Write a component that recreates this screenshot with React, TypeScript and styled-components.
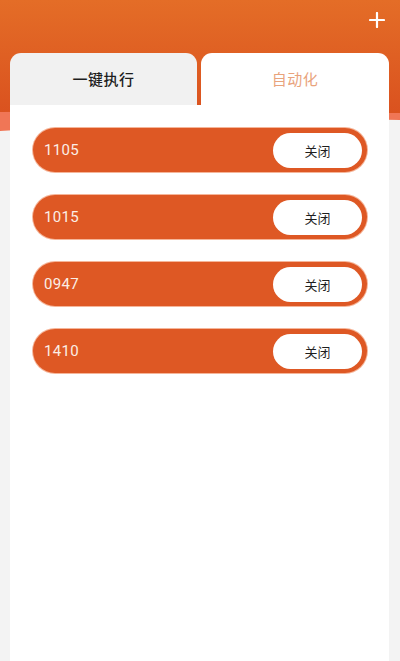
import React from "react";
import styled, { createGlobalStyle } from "styled-components";

const Global = createGlobalStyle`
  html, body { margin: 0; padding: 0; background: #f3f3f3; }
  body { font-family: Roboto, "Noto Sans CJK SC", sans-serif; }
  * { box-sizing: border-box; }
`;

const Page = styled.div`
  position: relative;
  min-height: 661px;
  overflow: hidden;
`;

const HeaderBg = styled.svg`
  position: absolute;
  left: 0;
  top: 0;
  width: 400px;
  height: 140px;
  z-index: 0;
`;

const Toolbar = styled.div`
  position: relative;
  z-index: 1;
  height: 53px;
  display: flex;
  justify-content: flex-end;
  align-items: flex-start;
  padding: 11px 14px 0 0;
`;

const IconButton = styled.button`
  border: none;
  background: transparent;
  padding: 0;
  width: 18px;
  height: 18px;
  display: flex;
  align-items: center;
  justify-content: center;
`;

const Panel = styled.div`
  position: relative;
  z-index: 1;
  margin: 0 11px 0 10px;
`;

const Tabs = styled.div`
  display: grid;
  grid-template-columns: 187px 1fr;
  column-gap: 4px;
  height: 52px;
`;

const Tab = styled.div<{ $active?: boolean }>`
  display: flex;
  align-items: center;
  justify-content: center;
  border-radius: 11px 11px 0 0;
  background: ${(p) => (p.$active ? "#ffffff" : "#f1f1f1")};
  color: ${(p) => (p.$active ? "#e9a37c" : "#1e1e1e")};
  font-family: "Noto Sans CJK SC", sans-serif;
  font-size: 15px;
  font-weight: ${(p) => (p.$active ? 400 : 500)};
  letter-spacing: 0.5px;
  padding-bottom: 2px;
`;

const Card = styled.div`
  background: #ffffff;
  min-height: 560px;
  padding: 23px 22px 0 23px;
  display: flex;
  flex-direction: column;
  gap: 23px;
`;

const Row = styled.div`
  height: 44px;
  border-radius: 22px;
  background: #de5824;
  box-shadow: 0 0 0 1px rgba(236, 120, 70, 0.55);
  display: flex;
  align-items: center;
  justify-content: space-between;
  padding: 0 5px 0 11px;
`;

const RowLabel = styled.span`
  color: #fbeee6;
  font-size: 15px;
  font-family: Roboto, sans-serif;
  letter-spacing: 0.3px;
`;

const CloseButton = styled.button`
  width: 89px;
  height: 35px;
  border-radius: 18px;
  border: none;
  background: #ffffff;
  color: #1e1e1e;
  font-family: "Noto Sans CJK SC", sans-serif;
  font-size: 13px;
  display: flex;
  align-items: center;
  justify-content: center;
  padding: 0;
`;

const items = ["1105", "1015", "0947", "1410"];

export default function App() {
  return (
    <>
      <Global />
      <Page>
        <HeaderBg viewBox="0 0 400 140" preserveAspectRatio="none">
          <defs>
            <linearGradient id="hg" x1="0" y1="0" x2="0" y2="1">
              <stop offset="0" stopColor="#e46d27" />
              <stop offset="1" stopColor="#da521f" />
            </linearGradient>
          </defs>
          <path d="M0 100 L400 100 L400 120 C300 118 150 122 0 131 Z" fill="#f07656" />
          <path d="M0 0 H400 V113 C300 112 150 111 0 112 Z" fill="url(#hg)" />
        </HeaderBg>
        <Toolbar>
          <IconButton aria-label="add">
            <svg width="16" height="16" viewBox="0 0 16 16">
              <path d="M8 1 V15 M1 8 H15" stroke="#ffffff" strokeWidth="2.2" strokeLinecap="round" />
            </svg>
          </IconButton>
        </Toolbar>
        <Panel>
          <Tabs>
            <Tab>一键执行</Tab>
            <Tab $active>自动化</Tab>
          </Tabs>
          <Card>
            {items.map((t) => (
              <Row key={t}>
                <RowLabel>{t}</RowLabel>
                <CloseButton>关闭</CloseButton>
              </Row>
            ))}
          </Card>
        </Panel>
      </Page>
    </>
  );
}
